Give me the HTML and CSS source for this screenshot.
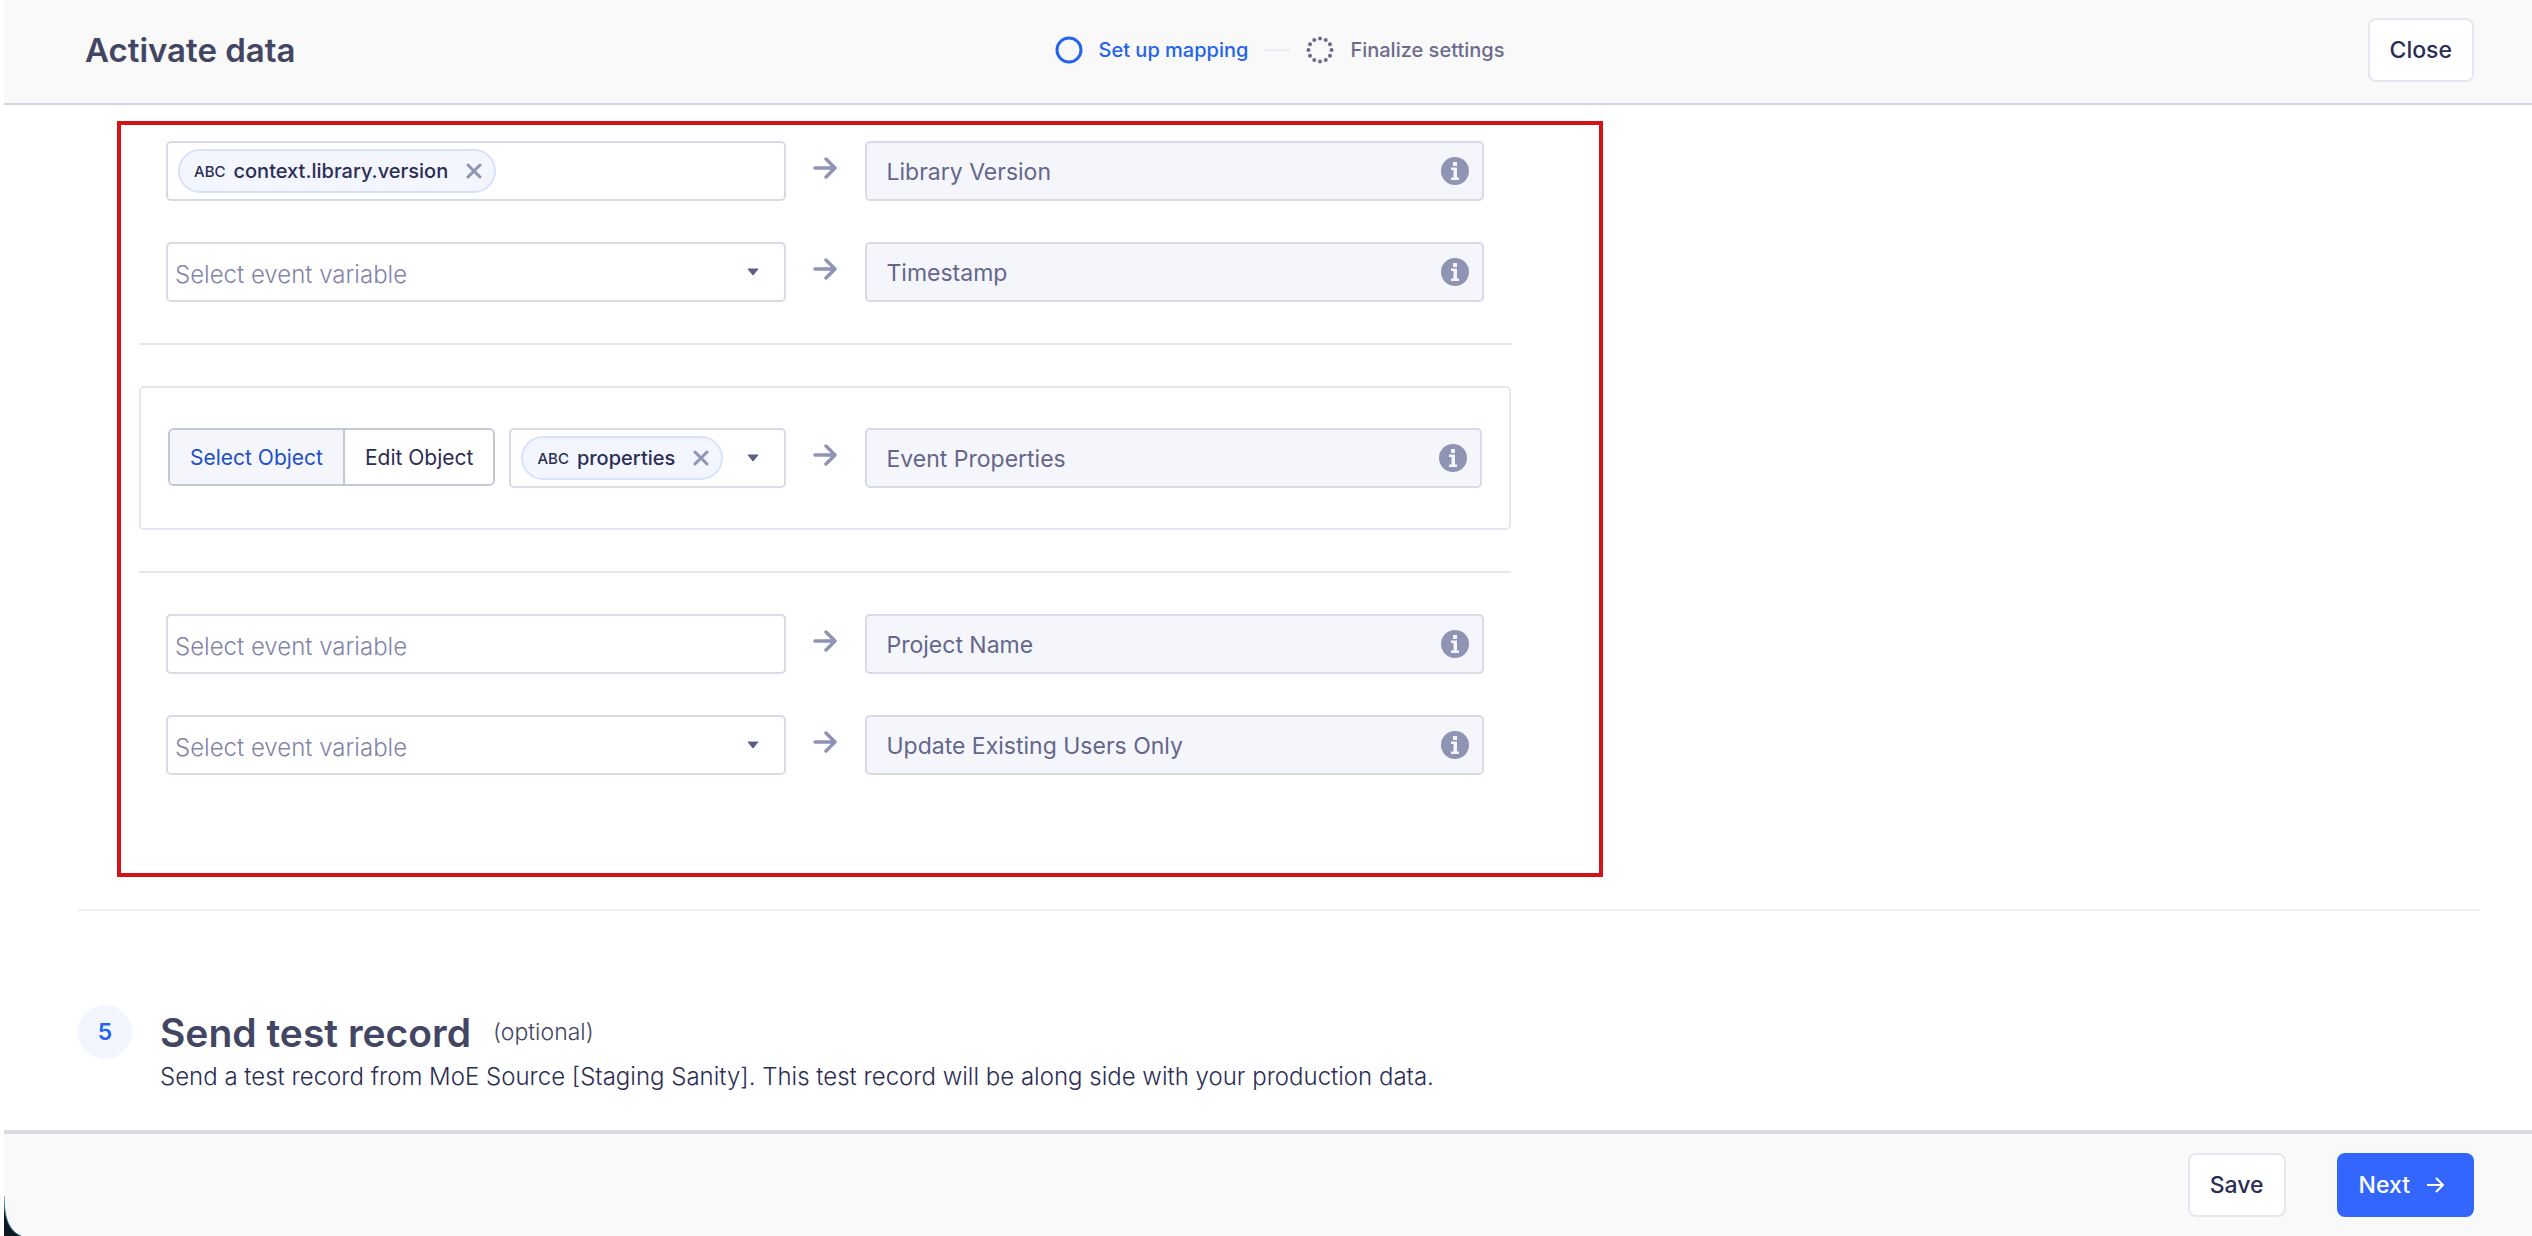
FILE: index.html
```html
<!DOCTYPE html>
<html lang="en">
<head>
  <meta charset="UTF-8">
  <meta name="viewport" content="width=device-width, initial-scale=1.0">
  <title>Activate data</title>
  <link rel="stylesheet" href="styles.css">
</head>
<body>
  <!-- shared icons -->
  <svg class="sprite" aria-hidden="true">
    <symbol id="arrow" viewBox="0 0 24 22">
      <path d="M2 11h20M13 2l9 9-9 9" fill="none" stroke="currentColor" stroke-width="3.500" stroke-linecap="round" stroke-linejoin="round"/>
    </symbol>
    <symbol id="cross" viewBox="0 0 16 16">
      <path d="M2 2l12 12M14 2L2 14" fill="none" stroke="currentColor" stroke-width="3" stroke-linecap="round"/>
    </symbol>
    <symbol id="caret" viewBox="0 0 12 8">
      <path d="M1 1h10L6 7z" fill="currentColor" stroke="currentColor" stroke-linejoin="round"/>
    </symbol>
    <symbol id="info" viewBox="0 0 28 28">
      <circle cx="14" cy="14" r="14" fill="currentColor"/>
      <path d="M12 5h4v4h-4zM10 10.500h6v10h2v2.500h-8v-2.500h2.500v-7.500h-2.500z" fill="#f4f6fb"/>
    </symbol>
  </svg>

  <div class="app">
    <header class="topbar">
      <h1>Activate data</h1>
      <ol class="steps">
        <li class="step active">
          <svg width="28" height="28" viewBox="0 0 28 28"><circle cx="14" cy="14" r="12" fill="none" stroke="currentColor" stroke-width="3"/></svg>
          Set up mapping
        </li>
        <li class="step-line"></li>
        <li class="step">
          <svg width="28" height="28" viewBox="0 0 28 28"><circle cx="14" cy="14" r="11.500" fill="none" stroke="currentColor" stroke-width="4" stroke-linecap="round" pathLength="120" stroke-dasharray="0 10"/></svg>
          Finalize settings
        </li>
      </ol>
      <button class="btn">Close</button>
    </header>

    <main>
      <section class="mapping">
        <div class="row">
          <div class="field">
            <span class="chip"><small>ABC</small> context.library.version
              <button aria-label="Remove"><svg width="16" height="16"><use href="#cross"/></svg></button>
            </span>
            <input type="text" aria-label="Library Version variable">
          </div>
          <svg class="arrow"><use href="#arrow"/></svg>
          <div class="field target">
            <input type="text" value="Library Version" aria-label="Destination field" readonly>
            <svg class="info"><use href="#info"/></svg>
          </div>
        </div>

        <div class="row">
          <div class="field">
            <select aria-label="Timestamp variable"><option>Select event variable</option></select>
            <svg class="caret"><use href="#caret"/></svg>
          </div>
          <svg class="arrow"><use href="#arrow"/></svg>
          <div class="field target">
            <input type="text" value="Timestamp" aria-label="Destination field" readonly>
            <svg class="info"><use href="#info"/></svg>
          </div>
        </div>

        <hr>

        <div class="card">
          <div class="row">
            <div class="object">
              <div class="toggle">
                <button class="selected">Select Object</button>
                <button>Edit Object</button>
              </div>
              <div class="field">
                <span class="chip"><small>ABC</small> properties
                  <button aria-label="Remove"><svg width="16" height="16"><use href="#cross"/></svg></button>
                </span>
                <button class="open" aria-label="Open list"><svg class="caret"><use href="#caret"/></svg></button>
              </div>
            </div>
            <svg class="arrow"><use href="#arrow"/></svg>
            <div class="field target">
              <input type="text" value="Event Properties" aria-label="Destination field" readonly>
              <svg class="info"><use href="#info"/></svg>
            </div>
          </div>
        </div>

        <hr>

        <div class="row">
          <div class="field">
            <input type="text" placeholder="Select event variable" aria-label="Project Name variable">
          </div>
          <svg class="arrow"><use href="#arrow"/></svg>
          <div class="field target">
            <input type="text" value="Project Name" aria-label="Destination field" readonly>
            <svg class="info"><use href="#info"/></svg>
          </div>
        </div>

        <div class="row">
          <div class="field">
            <select aria-label="Update Existing Users Only variable"><option>Select event variable</option></select>
            <svg class="caret"><use href="#caret"/></svg>
          </div>
          <svg class="arrow"><use href="#arrow"/></svg>
          <div class="field target">
            <input type="text" value="Update Existing Users Only" aria-label="Destination field" readonly>
            <svg class="info"><use href="#info"/></svg>
          </div>
        </div>
      </section>

      <section class="test-record">
        <span class="number">5</span>
        <div>
          <h2>Send test record <span>(optional)</span></h2>
          <p>Send a test record from MoE Source [Staging Sanity]. This test record will be along side with your production data.</p>
        </div>
      </section>
    </main>

    <footer>
      <svg class="corner" width="18" height="40" viewBox="0 0 18 40">
        <path d="M0 0C0 22 5 35 17 40H0z" fill="#0b1a22"/>
        <path d="M0 0C0 22 5 35 17 40" fill="none" stroke="#2a6f97" stroke-width="1"/>
      </svg>
      <button class="btn">Save</button>
      <button class="btn primary">Next
        <svg width="18" height="16" viewBox="0 0 18 16"><path d="M1 8h16M10 1l7 7-7 7" fill="none" stroke="currentColor" stroke-width="2" stroke-linejoin="round"/></svg>
      </button>
    </footer>
  </div>
</body>
</html>
```
FILE: styles.css
```css
* {
  box-sizing: border-box;
}

body {
  margin: 0;
  font-family: Inter, "Liberation Sans", sans-serif;
  font-size: 23px;
  color: #2b2d54;
  background: #fff;
}

button,
input,
select {
  font: inherit;
  color: inherit;
}

button {
  cursor: pointer;
}

.sprite {
  display: none;
}

.app {
  display: flex;
  flex-direction: column;
  min-height: 100vh;
  padding-left: 4px;
}

/* top bar */
.topbar {
  display: grid;
  grid-template-columns: 1fr auto 1fr;
  align-items: center;
  height: 105px;
  padding: 0 58px 4px 81px;
  background: #f9f9f9;
  border-bottom: 2px solid #d5d6de;
}

h1 {
  margin: 0;
  font-size: 33px;
  font-weight: 600;
  color: #434663;
}

.steps {
  display: flex;
  align-items: center;
  gap: 16px;
  margin: 0;
  padding: 0;
  list-style: none;
  font-size: 20px;
  font-weight: 500;
  color: #6b6b8d;
}

.step {
  display: flex;
  align-items: center;
  gap: 16px;
}

.step.active {
  color: #2463eb;
}

.step-line {
  width: 26px;
  height: 2px;
  background: #e9ebf5;
}

.btn {
  height: 64px;
  padding: 0 20px;
  font-size: 23px;
  font-weight: 500;
  background: #fff;
  border: 2px solid #e6e7ee;
  border-radius: 8px;
}

.topbar .btn {
  justify-self: end;
}

.btn.primary {
  display: flex;
  align-items: center;
  gap: 16px;
  padding-right: 28px;
  color: #fff;
  background: #3366ff;
  border-color: #3366ff;
}

/* mapping */
main {
  flex: 1;
  padding: 16px 52px 0 74px;
}

.mapping {
  display: flex;
  flex-direction: column;
  gap: 41px;
  max-width: 1486px;
  margin-left: 39px;
  padding: 16px 88px 98px 18px;
  border: 4px solid #d51317;
}

.row {
  display: grid;
  grid-template-columns: minmax(0, 1fr) 79px minmax(0, 1fr);
  margin: 0 27px;
}

.mapping hr {
  width: 100%;
  height: 2px;
  margin: 0;
  border: 0;
  background: #e6e7ee;
}

.field {
  display: flex;
  align-items: center;
  height: 60px;
  background: #fff;
  border: 2px solid #d8dae5;
  border-radius: 5px;
}

.field input,
.field select {
  flex: 1;
  min-width: 0;
  height: 100%;
  padding: 4px 7px 0;
  font-size: 24px;
  font-weight: 300;
  background: none;
  border: 0;
  outline: none;
  appearance: none;
}

.field select,
.field input::placeholder {
  color: #8384a8;
  opacity: 1;
}

.field.target {
  background: #f4f6fb;
}

.field.target input {
  padding-top: 2px;
  padding-left: 20px;
  font-size: 23px;
  font-weight: 400;
  color: #64668b;
}

.caret {
  width: 12px;
  height: 8px;
  margin-right: 25px;
  color: #5c5f85;
}

.info {
  width: 28px;
  height: 28px;
  margin-right: 13px;
  color: #8f94b5;
}

.arrow {
  width: 24px;
  height: 22px;
  margin-top: 16px;
  justify-self: center;
  color: #8f94b5;
}

.chip {
  display: flex;
  align-items: center;
  gap: 8px;
  height: 44px;
  margin-left: 10px;
  padding: 0 12px 0 14px;
  font-size: 20px;
  font-weight: 500;
  white-space: nowrap;
  background: #f3f6ff;
  border: 2px solid #d9e2fb;
  border-radius: 22px;
}

.chip small {
  font-size: 15px;
}

.chip button {
  display: flex;
  margin-left: 10px;
  padding: 0;
  color: #8f94b5;
  background: none;
  border: 0;
}

.card {
  padding: 40px 0;
  border: 2px solid #e6e7ee;
  border-radius: 5px;
}

.object {
  display: flex;
  gap: 14px;
}

.object .field {
  flex: 1;
}

.open {
  margin-left: auto;
  padding: 0;
  background: none;
  border: 0;
}

.open .caret {
  display: block;
}

.toggle {
  display: flex;
  height: 58px;
  border: 2px solid #c4c7d6;
  border-radius: 6px;
  overflow: hidden;
}

.toggle button {
  padding: 0 20px;
  font-size: 21px;
  font-weight: 400;
  background: #fff;
  border: 0;
}

.toggle .selected {
  color: #1e4fc9;
  background: #f4f6fb;
  border-right: 2px solid #c4c7d6;
}

/* test record */
.test-record {
  display: flex;
  gap: 28px;
  margin-top: 32px;
  padding: 94px 0 39px;
  border-top: 2px solid #eeeff4;
}

.number {
  display: grid;
  place-items: center;
  width: 54px;
  height: 54px;
  font-weight: 600;
  color: #2463eb;
  background: #f3f6ff;
  border-radius: 50%;
}

h2 {
  display: flex;
  align-items: center;
  gap: 22px;
  height: 54px;
  margin: 0;
  font-size: 39px;
  font-weight: 600;
  color: #434663;
}

h2 span {
  font-size: 23px;
  font-weight: 300;
}

.test-record p {
  margin: 4px 0 0;
  font-size: 24px;
  font-weight: 300;
  line-height: 28px;
}

footer {
  position: relative;
  display: flex;
  align-items: center;
  justify-content: flex-end;
  gap: 51px;
  height: 106px;
  padding: 0 58px 0 0;
  background: #f9f9f9;
  border-top: 4px solid #d9dae3;
}

/* rounded window corner */
.corner {
  position: absolute;
  left: 0;
  bottom: 0;
}
```
